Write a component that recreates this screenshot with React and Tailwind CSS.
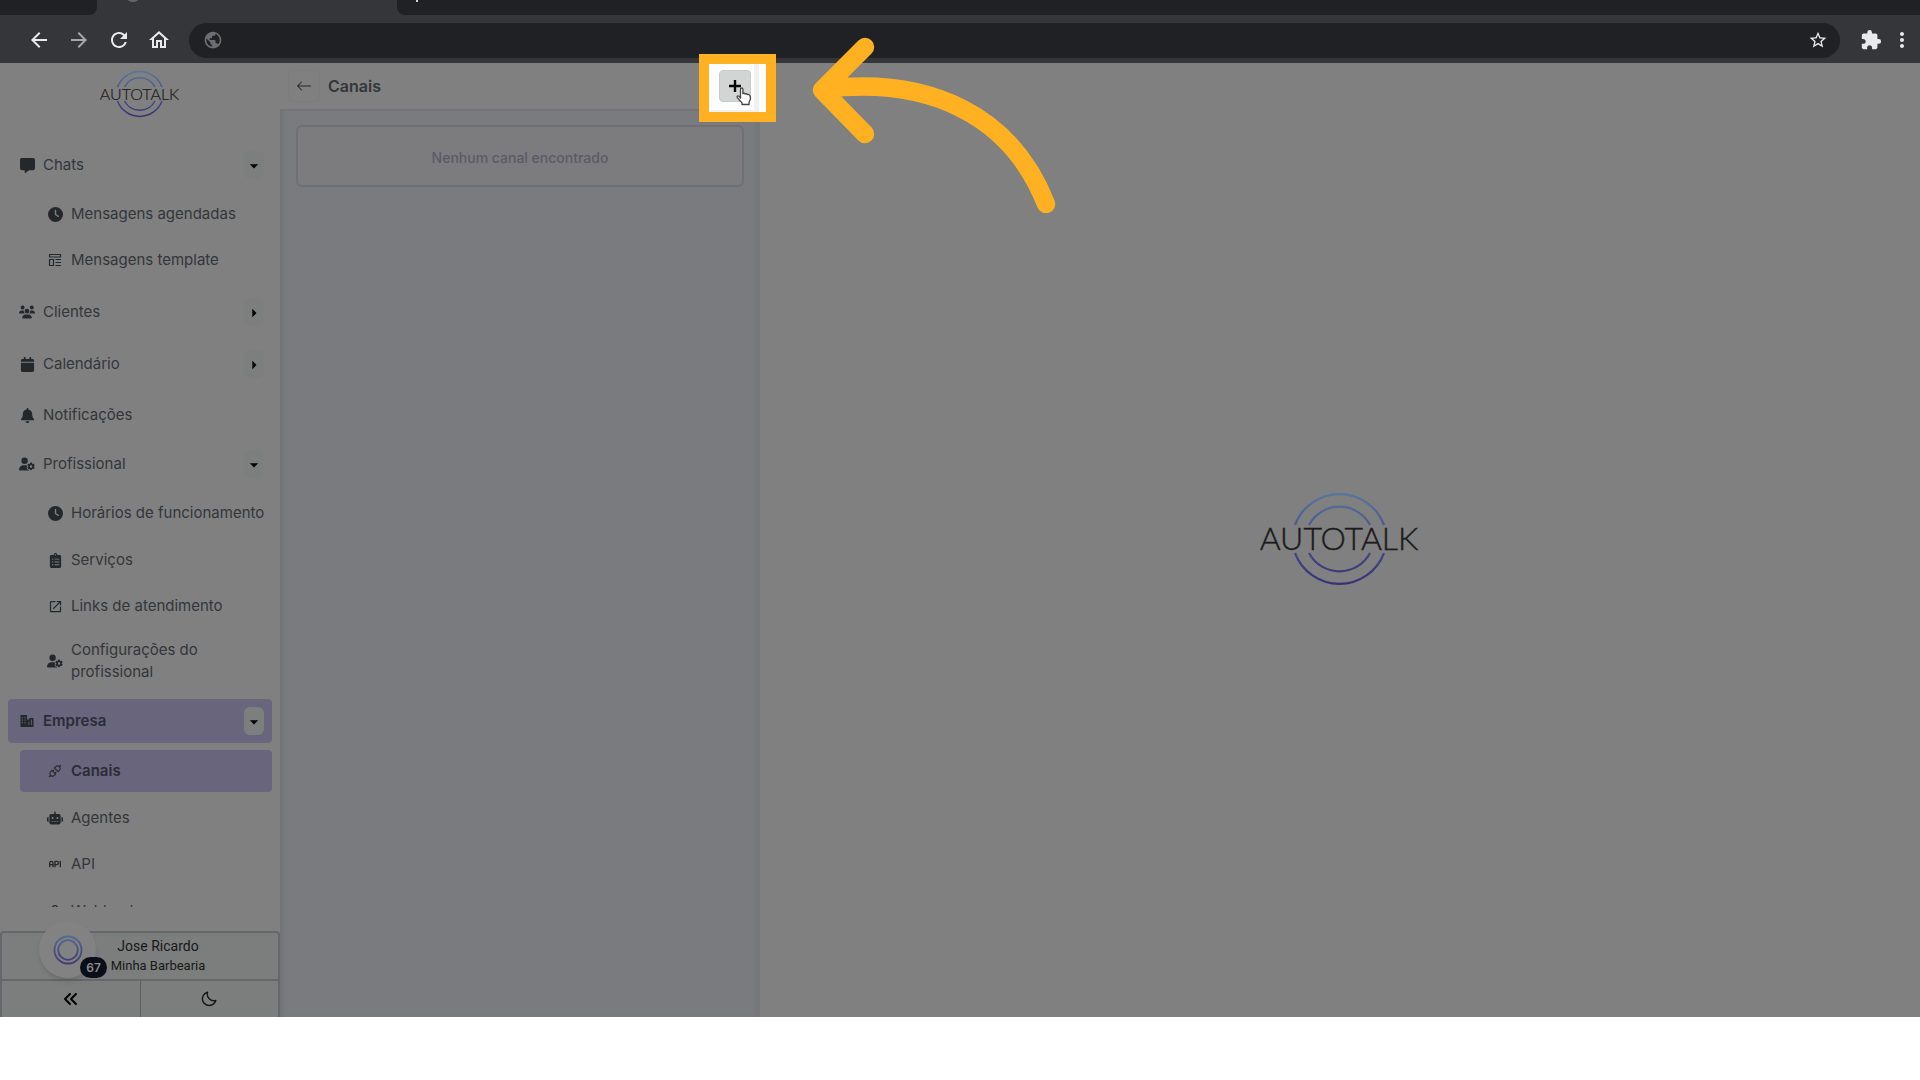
import React from "react";
import { FaMessage, FaClock, FaUsers, FaCalendar, FaBell, FaUserGear, FaRobot, FaAnglesLeft } from "react-icons/fa6";
import { FaClipboardList } from "react-icons/fa";
import { AiOutlineApi } from "react-icons/ai";
import { TbApi, TbWebhook } from "react-icons/tb";
import { BiMoon } from "react-icons/bi";
import { BsArrowLeft } from "react-icons/bs";
import { MdArrowBack, MdArrowForward, MdRefresh, MdOutlineHome, MdPublic, MdStarBorder, MdExtension, MdMoreVert, MdArrowDropDown, MdArrowRight, MdOpenInNew } from "react-icons/md";

function TemplateIcon() {
  return (
    <svg viewBox="0 0 16 16" className="size-4" fill="none" stroke="currentColor" strokeWidth="1.2" aria-hidden="true">
      <path d="M2.500 2.500h11v2.500h-11zM2.500 7.500h4v6h-4zM8.500 7.500H14M8.500 10.500H14M8.500 13.500H14" />
    </svg>
  );
}

function BuildingsIcon() {
  return (
    <svg viewBox="0 0 16 16" className="size-4" fill="currentColor" aria-hidden="true">
      <path
        fillRule="evenodd"
        d="M1.500 2h6.500v4.500h2V6l1-1h3.500v9H1.500zM2.800 4v1.200h1V4zM5.500 4v1.200h1V4zM2.800 6.500v1.200h1V6.500zM5.500 6.500v1.200h1V6.500zM2.800 9v1.200h1V9zM5.500 9v1.200h1V9zM9.500 8.500v3.500h.8V8.500zM12 6.500v5.500h.8V6.500z"
      />
    </svg>
  );
}

function Logo({ id, className, stroke }) {
  return (
    <svg viewBox="0 0 160 98" className={className} role="img" aria-label="AUTOTALK">
      <defs>
        <linearGradient id={id} x1="0" y1="2" x2="0" y2="96" gradientUnits="userSpaceOnUse">
          <stop offset="0" stopColor="#56779d" />
          <stop offset="0.35" stopColor="#4b5890" />
          <stop offset="1" stopColor="#392f76" />
        </linearGradient>
      </defs>
      <g fill="none" stroke={"url(#" + id + ")"} strokeWidth={stroke}>
        <path d="M35 34a47.500 47.500 0 0 1 89 0M49 34a34.500 34.500 0 0 1 61 0M35 62a47.500 47.500 0 0 0 89 0M49 62a34.500 34.500 0 0 0 61 0" />
      </g>
      <text x="79" y="59" textAnchor="middle" fontFamily="Lato, sans-serif" fontWeight="300" fontSize="32" fill="#1b1b1b" stroke="#1b1b1b" strokeWidth="0.4">
        AUTOTALK
      </text>
    </svg>
  );
}

function Toggle({ open, active, label }) {
  return (
    <button
      type="button"
      aria-label={label}
      aria-expanded={open}
      className={"flex h-7 w-5 shrink-0 items-center justify-center rounded-md pt-0.5 text-black " + (active ? "bg-[#7d7f7e]" : "bg-[#7d7e7e]")}
    >
      {open ? <MdArrowDropDown className="size-5 shrink-0" /> : <MdArrowRight className="size-5 shrink-0" />}
    </button>
  );
}

function Group({ icon, label, open, active, toggle = true, className = "" }) {
  return (
    <div className={"mx-2 flex h-11 shrink-0 items-center rounded pr-2 pl-[11px] " + (active ? "bg-[#69657c] " : "") + className}>
      <a href="#" className={"flex flex-1 items-center gap-2 " + (active ? "font-semibold text-[#2c2c37]" : "")}>
        <span className="flex w-4 justify-center text-[#25282b]">{icon}</span>
        {label}
      </a>
      {toggle && <Toggle open={open} active={active} label={label} />}
    </div>
  );
}

function Item({ icon, label, active, className }) {
  return (
    <a
      href="#"
      className={"mr-2 ml-5 flex shrink-0 items-center gap-2 rounded pl-[27px] leading-[22px] " + (active ? "bg-[#69657c] font-semibold text-[#2c2c37] " : "") + className}
    >
      <span className="flex w-4 shrink-0 justify-center text-[#25282b]">{icon}</span>
      {label}
    </a>
  );
}

function Browser() {
  return (
    <header className="bg-[#35363a]">
      <div className="flex h-[15px] overflow-hidden">
        <div className="w-[97px] rounded-br-lg bg-[#202124]" />
        <div className="flex w-[300px] items-start">
          <span className="-mt-3.5 ml-7 size-4 rounded-full bg-[#66686c]" />
        </div>
        <div className="flex flex-1 items-start rounded-bl-lg bg-[#202124]">
          <span className="ml-[19px] h-0.5 w-0.5 bg-[#d0d2d5]" />
        </div>
      </div>
      <div className="flex h-12 items-center pt-0.5 pr-1.5 pl-[27px] text-[#e8eaed]">
        <div className="flex items-center gap-4">
          <button type="button" aria-label="Voltar"><MdArrowBack className="size-6" /></button>
          <button type="button" aria-label="Avançar" className="text-[#a5a6a9]"><MdArrowForward className="size-6" /></button>
          <button type="button" aria-label="Recarregar"><MdRefresh className="size-6" /></button>
          <button type="button" aria-label="Início"><MdOutlineHome className="size-6" /></button>
        </div>
        <div className="ml-[18px] flex h-[35px] flex-1 items-center rounded-full bg-[#202124] pr-3 pl-3.5">
          <MdPublic className="size-5 text-[#6b6f74]" />
          <input aria-label="Endereço" className="min-w-0 flex-1 bg-transparent px-2 outline-none" />
          <button type="button" aria-label="Favoritar"><MdStarBorder className="size-5" /></button>
        </div>
        <button type="button" aria-label="Extensões" className="ml-5"><MdExtension className="size-[22px]" /></button>
        <button type="button" aria-label="Menu" className="ml-2"><MdMoreVert className="size-6" /></button>
      </div>
    </header>
  );
}

function Sidebar() {
  return (
    <aside className="flex w-[280px] shrink-0 flex-col">
      <Logo id="logo-small" stroke="3" className="mx-auto mt-[7px] w-20" />
      <nav className="mt-6 flex h-[764px] flex-col overflow-hidden text-[15px] text-[#33363a]">
        <Group icon={<FaMessage className="size-[15px]" />} label="Chats" open />
        <Item className="mt-1.5 h-[42px]" icon={<FaClock className="size-[15px]" />} label="Mensagens agendadas" />
        <Item className="mt-1 h-[42px]" icon={<TemplateIcon />} label="Mensagens template" />
        <Group className="mt-[9px]" icon={<FaUsers className="size-4" />} label="Clientes" />
        <Group className="mt-2" icon={<FaCalendar className="size-[15px]" />} label="Calendário" />
        <Group className="mt-[7px]" toggle={false} icon={<FaBell className="size-[15px]" />} label="Notificações" />
        <Group className="mt-[5px]" icon={<FaUserGear className="size-4" />} label="Profissional" open />
        <Item className="mt-1.5 h-[42px]" icon={<FaClock className="size-[15px]" />} label="Horários de funcionamento" />
        <Item className="mt-[5px] h-[42px]" icon={<FaClipboardList className="size-[15px]" />} label="Serviços" />
        <Item className="mt-1 h-[42px]" icon={<MdOpenInNew className="size-[15px]" />} label="Links de atendimento" />
        <Item className="mt-[5px] h-[58px] pr-10" icon={<FaUserGear className="size-4" />} label="Configurações do profissional" />
        <Group className="mt-[9px]" icon={<BuildingsIcon />} label="Empresa" open active />
        <Item className="mt-[7px] h-[42px]" icon={<AiOutlineApi className="size-4" />} label="Canais" active />
        <Item className="mt-[5px] h-[42px]" icon={<FaRobot className="size-4" />} label="Agentes" />
        <Item className="mt-1 h-[42px]" icon={<TbApi className="size-4" />} label="API" />
        <Item className="mt-[5px] h-[42px]" icon={<TbWebhook className="size-4" />} label="Webhooks" />
      </nav>
      <div className="relative mt-auto rounded-t border-2 border-b-0 border-[#66676b] bg-[#7c7e7d] font-[Roboto,sans-serif] text-[#17181a]">
        <div className="flex h-[46px] flex-col items-center justify-center pl-9">
          <span className="text-sm leading-5">Jose Ricardo</span>
          <span className="text-[13px] leading-5">Minha Barbearia</span>
        </div>
        <button type="button" aria-label="Atendimento" className="absolute -top-3 left-[37px] flex size-[57px] items-center justify-center rounded-full bg-[#828282] shadow-md">
          <svg viewBox="0 0 32 32" className="size-8" fill="none" strokeWidth="1.800" aria-hidden="true">
            <defs>
              <linearGradient id="ring" x1="0" y1="0" x2="0" y2="32" gradientUnits="userSpaceOnUse">
                <stop offset="0" stopColor="#566f91" />
                <stop offset="1" stopColor="#3f3370" />
              </linearGradient>
            </defs>
            <circle cx="16" cy="16" r="13.500" stroke="url(#ring)" />
            <circle cx="16" cy="16" r="9.800" stroke="url(#ring)" />
          </svg>
        </button>
        <span className="absolute top-6 left-[78px] flex h-[21px] w-[27px] items-center justify-center rounded-full bg-[#0b0d18] font-[Inter,sans-serif] text-xs font-semibold text-[#8d8d90]">67</span>
        <div className="flex h-[38px] border-t-2 border-[#66676b]">
          <button type="button" aria-label="Recolher menu" className="flex flex-1 items-center justify-center border-r border-[#5c5d60] text-black">
            <FaAnglesLeft className="size-4" />
          </button>
          <button type="button" aria-label="Modo escuro" className="flex flex-1 items-center justify-center">
            <BiMoon className="size-[18px]" />
          </button>
        </div>
      </div>
    </aside>
  );
}

function Channels() {
  return (
    <section className="flex w-[480px] shrink-0 flex-col border-r-[5px] border-[#77777a] bg-[#797b7e] shadow-[inset_6px_0_6px_-4px_#6f7075]">
      <div className="relative flex h-12 items-center border-b-2 border-[#747477] bg-[#808080] pl-2">
        <button type="button" aria-label="Voltar" className="flex size-8 items-center justify-center rounded border border-[#7d7d7d] text-[#25282b]">
          <BsArrowLeft className="size-4" />
        </button>
        <h1 className="ml-2 text-base font-semibold text-[#33363a]">Canais</h1>
        <div className="absolute -top-[9px] left-[419px] flex h-[68px] w-[77px] border-10 border-[#ffb122] bg-white">
          <div className="flex w-[45px] items-center justify-end border-b-2 border-[#f2f2f4] pr-[3px] pb-0.5">
            <button type="button" aria-label="Adicionar canal" className="flex size-8 items-center justify-center rounded border border-[#c9cbca] bg-[#d3d5d4] text-black">
              <svg viewBox="0 0 12 12" className="size-3" fill="none" stroke="currentColor" strokeWidth="2.400" aria-hidden="true">
                <path d="M6 0v12M0 6h12" />
              </svg>
            </button>
          </div>
          <div className="w-[5px] bg-[#f0f0f3]" />
          <svg viewBox="0 0 18 20" className="absolute top-[23px] left-[26px] h-5 w-[18px]" fill="#fff" stroke="#444" strokeWidth="1.300" strokeLinejoin="round" aria-hidden="true">
            <path d="M5.500 11V2.200c0-1.600 2.400-1.600 2.400 0v4.600c.5-1 2-.8 2.200.3.600-.8 2-.5 2.200.6.700-.6 2.200-.3 2.800 1.200.9 2-.2 4.800-1 6.100v2.500H7v-1.700C5.500 14.500 4 12.700 2.300 10.600c-.8-1.300.7-2.300 1.700-1.300z" />
          </svg>
        </div>
      </div>
      <p className="mt-[14px] mr-[11px] ml-4 flex h-[62px] items-center justify-center rounded-md border-2 border-[#6f7073] bg-[#7c7c7e] pt-1 text-sm font-medium text-[#5a5a67]">
        Nenhum canal encontrado
      </p>
    </section>
  );
}

export default function App() {
  return (
    <div className="flex min-h-screen flex-col bg-white font-[Inter,sans-serif]">
      <Browser />
      <div className="relative flex h-[954px] bg-[#808080]">
        <Sidebar />
        <Channels />
        <main className="flex flex-1 items-center justify-center">
          <Logo id="logo-large" stroke="2.200" className="w-40" />
        </main>
        <svg viewBox="0 0 244 176" className="absolute -top-[26px] left-[812px] h-44 w-[244px]" fill="none" stroke="#ffb122" strokeWidth="18.500" strokeLinecap="round" strokeLinejoin="round" aria-hidden="true">
          <path d="M53 10 10 53l43 44M12 52C120 39 200 80 234 167" />
        </svg>
      </div>
    </div>
  );
}
